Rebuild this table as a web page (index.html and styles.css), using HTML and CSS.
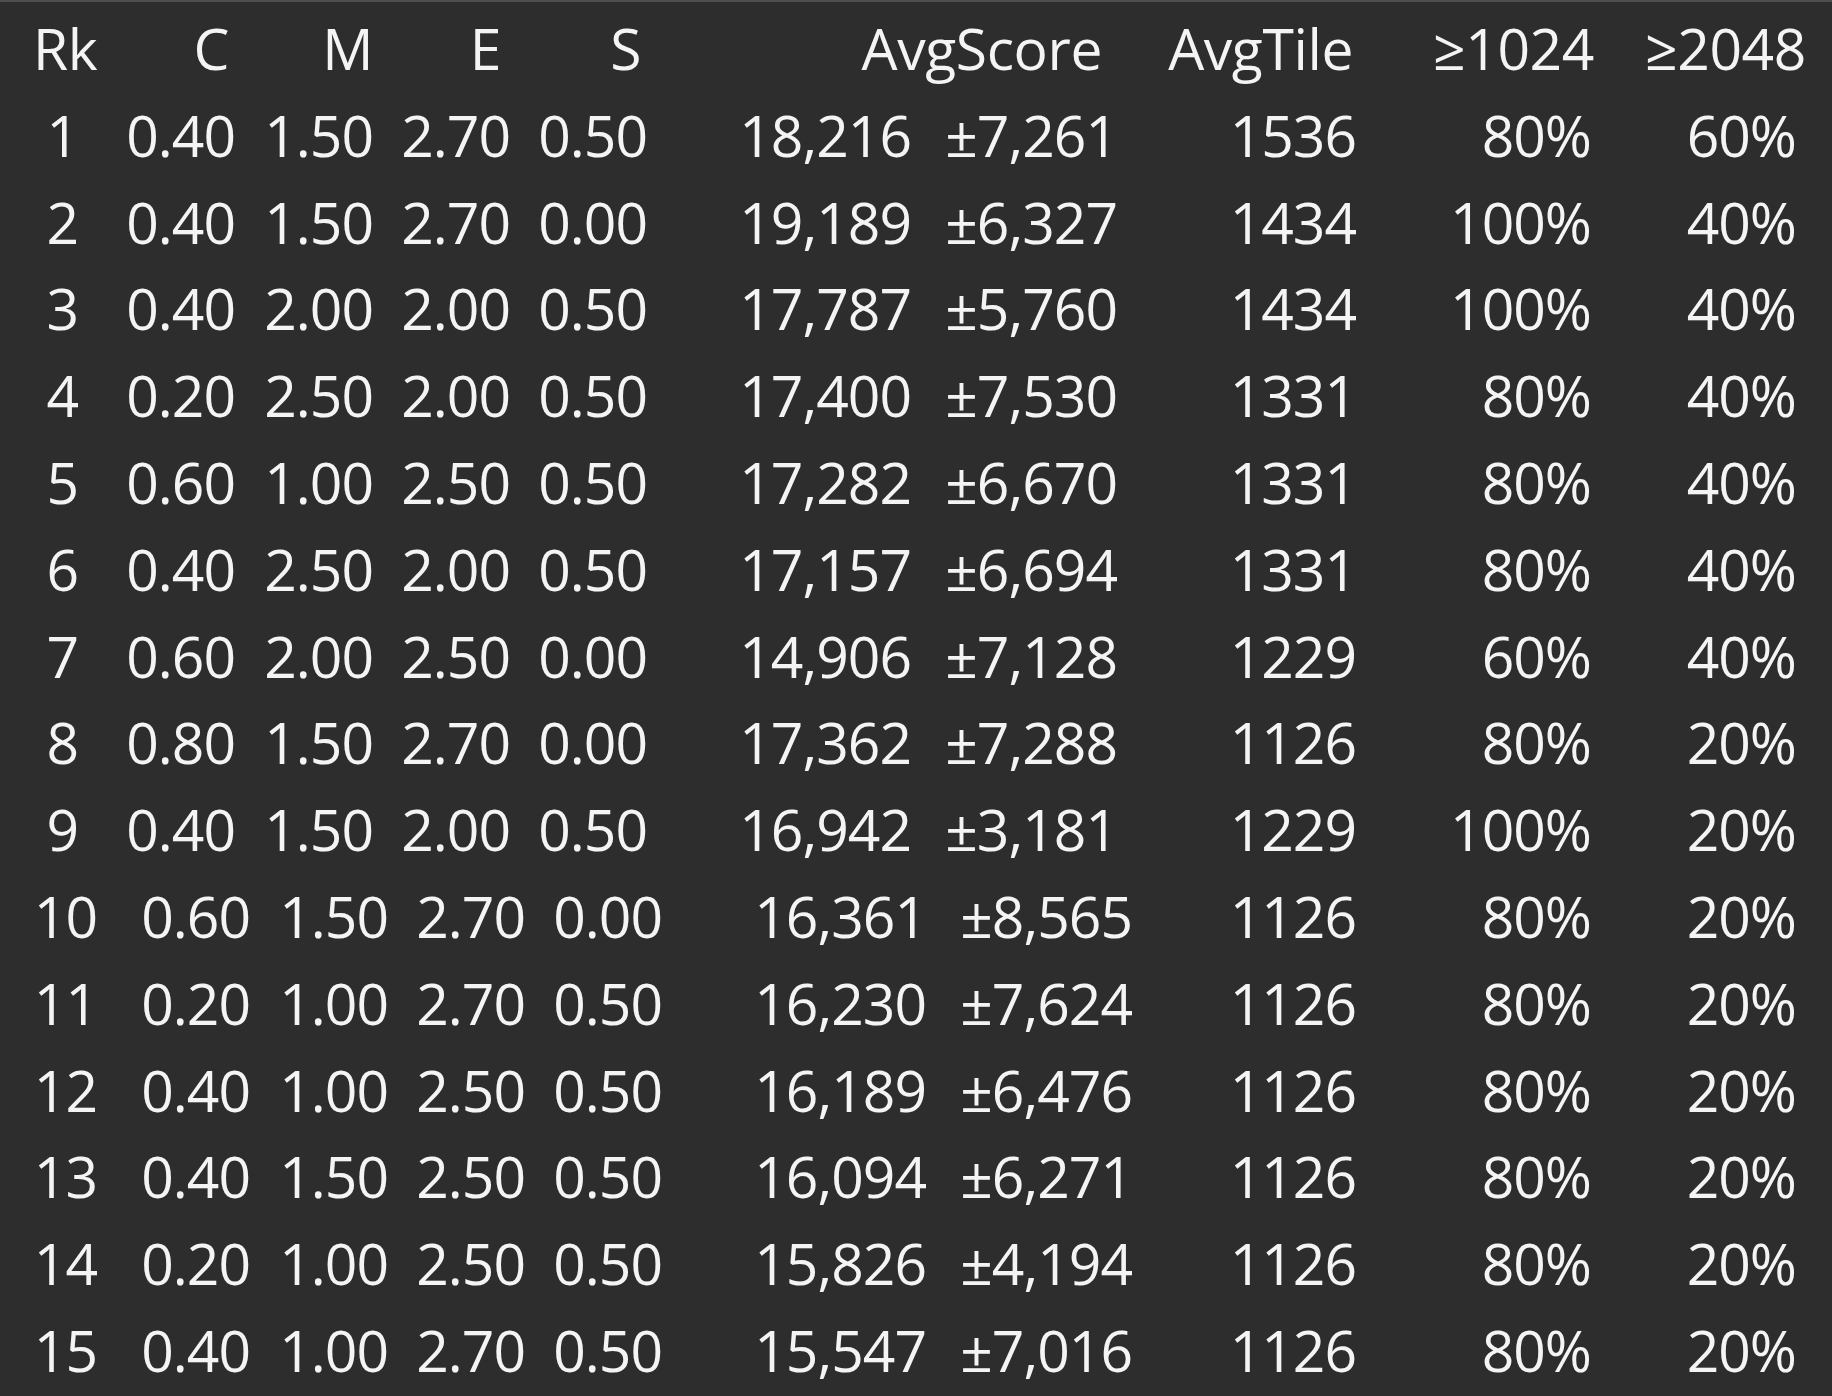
FILE: index.html
```html
<!DOCTYPE html>
<html lang="en">
<head>
<meta charset="utf-8">
<title>Results</title>
<link rel="stylesheet" href="styles.css">
</head>
<body>
<div class="table">
  <div class="row hdr">
    <span class="rk-h">Rk</span><span>C</span><span>M</span><span>E</span><span>S</span><span>AvgScore</span><span>AvgTile</span><span>≥1024</span><span>≥2048</span>
  </div>
  <div class="row r1"><span>1</span><span>0.40</span><span>1.50</span><span>2.70</span><span>0.50</span><span>18,216</span><span>±7,261</span><span>1536</span><span>80%</span><span>60%</span></div>
  <div class="row r1"><span>2</span><span>0.40</span><span>1.50</span><span>2.70</span><span>0.00</span><span>19,189</span><span>±6,327</span><span>1434</span><span>100%</span><span>40%</span></div>
  <div class="row r1"><span>3</span><span>0.40</span><span>2.00</span><span>2.00</span><span>0.50</span><span>17,787</span><span>±5,760</span><span>1434</span><span>100%</span><span>40%</span></div>
  <div class="row r1"><span>4</span><span>0.20</span><span>2.50</span><span>2.00</span><span>0.50</span><span>17,400</span><span>±7,530</span><span>1331</span><span>80%</span><span>40%</span></div>
  <div class="row r1"><span>5</span><span>0.60</span><span>1.00</span><span>2.50</span><span>0.50</span><span>17,282</span><span>±6,670</span><span>1331</span><span>80%</span><span>40%</span></div>
  <div class="row r1"><span>6</span><span>0.40</span><span>2.50</span><span>2.00</span><span>0.50</span><span>17,157</span><span>±6,694</span><span>1331</span><span>80%</span><span>40%</span></div>
  <div class="row r1"><span>7</span><span>0.60</span><span>2.00</span><span>2.50</span><span>0.00</span><span>14,906</span><span>±7,128</span><span>1229</span><span>60%</span><span>40%</span></div>
  <div class="row r1"><span>8</span><span>0.80</span><span>1.50</span><span>2.70</span><span>0.00</span><span>17,362</span><span>±7,288</span><span>1126</span><span>80%</span><span>20%</span></div>
  <div class="row r1"><span>9</span><span>0.40</span><span>1.50</span><span>2.00</span><span>0.50</span><span>16,942</span><span>±3,181</span><span>1229</span><span>100%</span><span>20%</span></div>
  <div class="row r2"><span>10</span><span>0.60</span><span>1.50</span><span>2.70</span><span>0.00</span><span>16,361</span><span>±8,565</span><span>1126</span><span>80%</span><span>20%</span></div>
  <div class="row r2"><span>11</span><span>0.20</span><span>1.00</span><span>2.70</span><span>0.50</span><span>16,230</span><span>±7,624</span><span>1126</span><span>80%</span><span>20%</span></div>
  <div class="row r2"><span>12</span><span>0.40</span><span>1.00</span><span>2.50</span><span>0.50</span><span>16,189</span><span>±6,476</span><span>1126</span><span>80%</span><span>20%</span></div>
  <div class="row r2"><span>13</span><span>0.40</span><span>1.50</span><span>2.50</span><span>0.50</span><span>16,094</span><span>±6,271</span><span>1126</span><span>80%</span><span>20%</span></div>
  <div class="row r2"><span>14</span><span>0.20</span><span>1.00</span><span>2.50</span><span>0.50</span><span>15,826</span><span>±4,194</span><span>1126</span><span>80%</span><span>20%</span></div>
  <div class="row r2"><span>15</span><span>0.40</span><span>1.00</span><span>2.70</span><span>0.50</span><span>15,547</span><span>±7,016</span><span>1126</span><span>80%</span><span>20%</span></div>
</div>
</body>
</html>
```

FILE: styles.css
```css
html, body {
  margin: 0;
  padding: 0;
  background: #2d2d2d;
}

body {
  width: 1832px;
  height: 1396px;
  overflow: hidden;
  box-sizing: border-box;
  border-top: 2px solid #4e4e4e;
  color: #f4f4f4;
  font-family: "Open Sans", "Noto Sans", "DejaVu Sans", sans-serif;
  font-size: 57px;
  letter-spacing: -1px;
}

.table {
  display: flex;
  flex-direction: column;
  padding-top: 3px;
}

.row {
  display: grid;
  line-height: 86.8px;
  height: 86.8px;
  white-space: nowrap;
}

.row span {
  text-align: right;
  padding-right: 2px;
}

.hdr {
  grid-template-columns: 98px 133px 144px 128px 140px 461px 251px 241px 212px;
  letter-spacing: -0.4px;
}

.hdr .rk-h {
  text-align: left;
  padding-left: 33px;
  padding-right: 0;
}

.r1 {
  grid-template-columns: 80px 157px 138px 137px 137px 264px 206px 239px 235px 205px;
}

.r2 {
  grid-template-columns: 99px 153px 138px 137px 137px 264px 206px 224px 235px 205px;
}
```
